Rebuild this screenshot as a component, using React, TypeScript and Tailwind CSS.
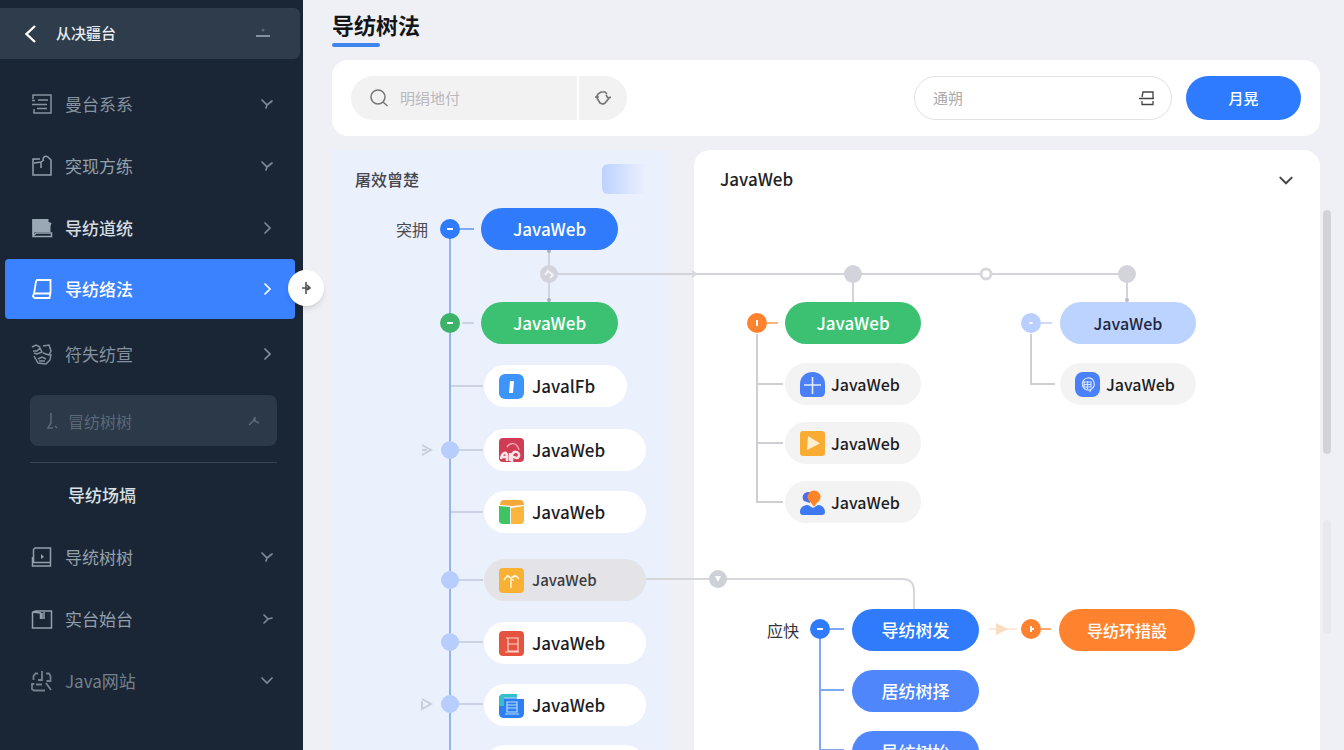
import type { ReactNode } from 'react';
import { clsx } from 'clsx';

const FONT = "font-['Noto_Sans_CJK_SC','Noto_Sans',sans-serif]";

type Chevron = 'down' | 'right' | 'fork' | 'forkRight';

const CHEVRON_PATH: Record<Chevron, string> = {
  down: 'M2 4l5 5 5-5',
  right: 'M5 2l5 5-5 5',
  fork: 'M2 3l5 5 5-4M7 8l-1 3',
  forkRight: 'M4 3l4 4-4 4M8 7l4-1',
};

const ChevronIcon = ({ type, className }: { type: Chevron; className?: string }) => (
  <svg
    aria-hidden
    className={clsx('shrink-0', className ?? 'size-3.5')}
    fill="none"
    stroke="currentColor"
    strokeLinecap="round"
    strokeWidth="1.7"
    viewBox="0 0 14 14"
  >
    <path d={CHEVRON_PATH[type]} />
  </svg>
);

const MenuIcon = ({ children }: { children: ReactNode }) => (
  <svg
    aria-hidden
    className="size-[22px] shrink-0"
    fill="none"
    stroke="currentColor"
    strokeWidth="1.5"
    viewBox="0 0 22 22"
  >
    {children}
  </svg>
);

interface MenuItem {
  label: string;
  chevron: Chevron;
  icon: ReactNode;
  tone: string;
}

const TOP_MENU: MenuItem[] = [
  {
    label: '曼台系系',
    chevron: 'fork',
    tone: 'text-[#8793a0]',
    icon: <path d="M2 6V2h18v18H3v-4M7 7h10M1 11.500h15M1 7.500h3M6 15.500h10" />,
  },
  {
    label: '突现方练',
    chevron: 'fork',
    tone: 'text-[#93a0ac]',
    icon: <path d="M9 4H2v16h18V5l-3-3c-3-2-5 0-5 3M3 8l7-1v6M10 7l3-2" />,
  },
  {
    label: '导纺道统',
    chevron: 'right',
    tone: 'font-medium text-[#d5dbe1]',
    icon: (
      <>
        <path d="M1.500 2h16v3l3 1-1 3v6H4l-2.500 3z" fill="#9aa8b5" stroke="none" />
        <path d="M2 2v17.500h18.500V16H5l-3 3" stroke="#9aa8b5" />
      </>
    ),
  },
];

const BOTTOM_MENU: MenuItem[] = [
  {
    label: '导统树树',
    chevron: 'fork',
    tone: 'text-[#93a0ac]',
    icon: (
      <>
        <path d="M2.500 16V3.500L4 2h15.500v18H1.500v-9M2 16.500h17.500" />
        <path d="M10 8l3 3-3 2z" fill="currentColor" stroke="none" />
      </>
    ),
  },
  {
    label: '实台始台',
    chevron: 'forkRight',
    tone: 'text-[#93a0ac]',
    icon: <path d="M1.500 4v16h19V3H5L1.500 4l8 1v6M13 4v7M11 5v6" />,
  },
  {
    label: 'Java网站',
    chevron: 'down',
    tone: 'text-[#74808d]',
    icon: (
      <path
        d="M11 1v9H7M7 3.500H4.500L2.500 6v4M15 3.500h3l1.500 2.500v5h-4M2.500 13v1H1v5l2 1.500h11M5 14.500h6M15 13l5 7"
        strokeWidth="1.800"
      />
    ),
  },
];

const MenuRow = ({ item }: { item: MenuItem }) => (
  <button
    className={clsx('flex h-[62px] w-full items-center pr-[29px] pl-[31px] text-left', item.tone)}
    type="button"
  >
    <MenuIcon>{item.icon}</MenuIcon>
    <span className="ml-3 flex-1 text-[17px]">{item.label}</span>
    <span className="text-[#7d8996]">
      <ChevronIcon type={item.chevron} />
    </span>
  </button>
);

const Sidebar = () => (
  <aside className="relative z-10 w-[303px] shrink-0 bg-[#1a2635] pt-2">
    <div className="mr-[3px] flex h-[51px] items-center rounded-r-md bg-[#2e3c4c] pr-[30px] pl-6 text-white">
      <button aria-label="返回" type="button">
        <svg
          aria-hidden
          className="h-5 w-3"
          fill="none"
          stroke="currentColor"
          strokeWidth="2.400"
          viewBox="0 0 12 20"
        >
          <path d="M11 2L2.500 10l8.500 8" />
        </svg>
      </button>
      <span className="ml-5 flex-1 text-[15px] font-medium text-[#e8ecf0]">从决疆台</span>
      <svg aria-hidden className="h-3 w-3.5" fill="#8491a0" viewBox="0 0 14 12">
        <circle cx="7" cy="2" fillOpacity=".5" r="1.500" />
        <path d="M0 7h14v2H0z" />
      </svg>
    </div>

    <nav className="mt-3.5">
      {TOP_MENU.map((item) => (
        <MenuRow item={item} key={item.label} />
      ))}

      <button
        aria-current="page"
        className="mr-2 ml-[5px] flex h-[60px] w-[290px] items-center rounded bg-[#3a82ff] pr-[21px] pl-[26px] text-left text-white"
        type="button"
      >
        <MenuIcon>
          <path
            d="M6 2h13.500v12.500l-1.500 1H3L5 3.500zM3 15.500L2 18l1.500 2H18.500l1-5.500"
            strokeWidth="1.800"
          />
        </MenuIcon>
        <span className="ml-3 flex-1 text-[17px] font-medium">导纺络法</span>
        <ChevronIcon type="right" />
      </button>

      <button
        className="mt-1 flex h-[62px] w-full items-center pr-[29px] pl-[31px] text-left text-[#84909d]"
        type="button"
      >
        <MenuIcon>
          <path d="M1 4l4-2 4 2M2 8h4l3-3 2 4-5 2-3-1M12 3l6-1 2 6-2 4-6-2M3 13l4 7 8 1 4-4 1-6M7 16l4-2 4 2M8 18h6" />
        </MenuIcon>
        <span className="ml-3 flex-1 text-[17px]">符失纺宣</span>
        <ChevronIcon type="right" />
      </button>

      <button
        className="mt-2.5 mr-[26px] ml-[30px] flex h-[51px] w-[247px] items-center rounded-lg bg-[#2c3948] px-4 text-left text-[#5b6876]"
        type="button"
      >
        <svg
          aria-hidden
          className="h-[18px] w-3"
          fill="none"
          stroke="currentColor"
          strokeWidth="1.500"
          viewBox="0 0 12 18"
        >
          <path d="M5 1v10L2 16h5M9 14l2 2" />
        </svg>
        <span className="ml-2.5 flex-1 text-base">冒纺树树</span>
        <svg
          aria-hidden
          className="h-3 w-3.5"
          fill="none"
          stroke="currentColor"
          strokeWidth="1.500"
          viewBox="0 0 14 12"
        >
          <path d="M2 10l4-4 2-4v4l4 2M6 6h2" />
        </svg>
      </button>

      <hr className="mt-4 mr-[26px] mb-px ml-[30px] border-[#364352]" />

      <a
        className="flex h-[62px] items-center pl-[68px] text-[17px] font-medium text-[#dce1e6]"
        href="#tree"
      >
        导纺场塥
      </a>

      {BOTTOM_MENU.map((item) => (
        <MenuRow item={item} key={item.label} />
      ))}
    </nav>

    <button
      aria-label="展开"
      className="absolute top-[270px] -right-[21px] flex size-9 items-center justify-center rounded-full bg-white text-[#555] shadow-md"
      type="button"
    >
      <svg
        aria-hidden
        className="size-3"
        fill="none"
        stroke="currentColor"
        strokeWidth="1.600"
        viewBox="0 0 12 12"
      >
        <path d="M6 0v12M2 6h8M7 3l3 3-3 2" />
      </svg>
    </button>
  </aside>
);

const Toolbar = () => (
  <form className="mt-[13px] mr-6 flex h-[76px] items-center justify-between rounded-2xl bg-white px-[19px]">
    <div className="flex h-11 gap-0.5">
      <label className="flex w-[226px] items-center rounded-l-full rounded-r-md bg-[#f2f2f3] pl-[19px]">
        <svg
          aria-hidden
          className="size-[18px] shrink-0 text-[#777]"
          fill="none"
          stroke="currentColor"
          strokeWidth="1.500"
          viewBox="0 0 18 18"
        >
          <circle cx="8" cy="8" r="7" />
          <path d="M13 13l4.500 4" />
        </svg>
        <input
          aria-label="搜索"
          className="ml-3 w-40 bg-transparent text-[15px] outline-none placeholder:text-[#b9b9bc]"
          placeholder="明绢地付"
          type="text"
        />
      </label>
      <button
        aria-label="刷新"
        className="flex w-12 items-center justify-center rounded-r-full bg-[#f2f2f3] text-[#777]"
        type="button"
      >
        <svg
          aria-hidden
          className="size-4"
          fill="none"
          stroke="currentColor"
          strokeWidth="1.700"
          viewBox="0 0 16 16"
        >
          <path d="M1 8l2-4 3-2h4l2 2M0 7h4M2 8l3 5 3 1 2-1 5-6M11 5l2 3 3-1" />
        </svg>
      </button>
    </div>

    <div className="flex h-11 gap-3.5">
      <label className="flex w-[258px] items-center justify-between rounded-full border border-[#e2e2e5] pr-4 pl-[18px]">
        <input
          aria-label="筛选"
          className="w-40 bg-transparent text-[15px] outline-none placeholder:text-[#a9a9ac]"
          placeholder="通朔"
          type="text"
        />
        <svg
          aria-hidden
          className="size-4 text-[#444]"
          fill="none"
          stroke="currentColor"
          strokeWidth="1.300"
          viewBox="0 0 16 16"
        >
          <path d="M3 7l1-5h10v6M0 8.500h15M3 11v3.500h11V11" />
        </svg>
      </label>
      <button
        className="w-[115px] rounded-full bg-[#2f7bff] text-[15px] font-medium text-white"
        type="button"
      >
        月晃
      </button>
    </div>
  </form>
);

const NODE_TONE = {
  blue: 'text-[17px] bg-[#2f7bfb] text-white',
  softBlue: 'text-[17px] bg-[#4f86fb] text-white',
  green: 'text-[17px] bg-[#3cc172] text-white',
  orange: 'text-base bg-[#ff832f] text-white',
  light: 'text-base bg-[#bcd2ff] text-[#1c2740]',
  white: 'text-[17px] bg-white text-[#1d1d1f]',
  grey: 'text-base bg-[#f3f3f4] text-[#1d1d1f]',
  muted: 'text-[15px] bg-[#e3e3e8] text-[#3c3c40]',
};

const NODE_ICON: Record<string, ReactNode> = {
  info: (
    <>
      <rect fill="#3d95fb" height="25" rx="6" width="25" />
      <path d="M11 7h4l-1 12h-4z" fill="#fff" />
    </>
  ),
  script: (
    <>
      <rect fill="#cf3c54" height="24" rx="4" width="25" />
      <path
        d="M2 21c1-7 6-8 6-3v5M3 19h5M11 15v8M13 24v-6c0-6 8-5 7 0-1 3-5 2-5 0"
        fill="none"
        stroke="#ffe3e6"
        strokeWidth="2.500"
      />
      <path d="M8 9c3-5 10-5 12 3" fill="none" stroke="#f2a3ad" strokeWidth="1.500" />
    </>
  ),
  box: (
    <>
      <path d="M0 6l11 1v17H4q-4 0-4-4z" fill="#3fc464" />
      <path d="M12 8l13-2v14q0 4-4 4h-9z" fill="#fbb73c" />
      <path d="M4 0h17q4 0 4 5l-12 1L1 5q0-4 3-5z" fill="#f6a93b" />
    </>
  ),
  palm: (
    <>
      <rect fill="#f9b133" height="25" rx="4" width="25" />
      <path
        d="M12 10v10M12 10L8 7M12 10l4-3M5 12l3-4 4 2 5-2 3 3M12 12h3"
        fill="none"
        stroke="#fff3d6"
        strokeWidth="1.500"
      />
    </>
  ),
  sheet: (
    <>
      <rect fill="#e4543f" height="25" rx="4" width="25" />
      <path d="M7 7h12v13H9M9 7v13M9 13h10M6 21h14" fill="none" stroke="#ffd3cc" strokeWidth="1.200" />
    </>
  ),
  note: (
    <>
      <path d="M5 1h13v5h7v14q0 5-5 5H5q-5 0-5-5V6q0-5 5-5z" fill="#2d7ff3" />
      <path d="M5 1h13v4H5v8H0V6q0-5 5-5z" fill="#35bfca" />
      <path d="M5 5h13M8 9h10v10H8zM8 12h10M8 15h10M6 21h14" fill="none" stroke="#b9dcff" strokeWidth="1.200" />
    </>
  ),
  plus: (
    <>
      <path d="M12.500 0C20 0 25 5 25 12v8q0 5-5 5H5q-5 0-5-5v-8C0 5 5 0 12.500 0z" fill="#4a7ff5" />
      <path d="M12.500 5v17M4 13h17" stroke="#e5edff" strokeWidth="1.600" />
    </>
  ),
  play: (
    <>
      <rect fill="#f9ab32" height="25" rx="3" width="25" />
      <path d="M8 5l12 7.500L7 19z" fill="#fff0d0" />
    </>
  ),
  user: (
    <>
      <path d="M10 2C3 1 1 7 4 11l6 2z" fill="#4a6fe8" />
      <circle cx="14" cy="7" fill="#ff8426" r="6.500" />
      <path d="M9 10l5 7 4-6z" fill="#ff8426" />
      <path d="M0 22c0-5 4-7 8-7l5 3 5-3c4 0 7 3 7 7q0 3-3 3H3q-3 0-3-3z" fill="#3f78f3" />
    </>
  ),
  globe: (
    <>
      <rect fill="#4a80fa" height="25" rx="8" width="25" />
      <path
        d="M12.500 6a6 6 0 1 0 4 11M12.500 6a6 6 0 0 1 4 11l-2 3M9 10h7v5H9zM12.500 9v8M9 12.500h7"
        fill="none"
        stroke="#d8e5ff"
        strokeWidth="1.200"
      />
    </>
  ),
};

interface TreeNode {
  x: number;
  y: number;
  width: number;
  label: string;
  tone: keyof typeof NODE_TONE;
  icon?: string;
}

const NODES: TreeNode[] = [
  { x: 149, y: 58, width: 137, label: 'JavaWeb', tone: 'blue' },
  { x: 149, y: 152, width: 137, label: 'JavaWeb', tone: 'green' },
  { x: 152, y: 215, width: 143, label: 'JavalFb', tone: 'white', icon: 'info' },
  { x: 152, y: 279, width: 162, label: 'JavaWeb', tone: 'white', icon: 'script' },
  { x: 152, y: 341, width: 162, label: 'JavaWeb', tone: 'white', icon: 'box' },
  { x: 152, y: 409, width: 162, label: 'JavaWeb', tone: 'muted', icon: 'palm' },
  { x: 152, y: 472, width: 162, label: 'JavaWeb', tone: 'white', icon: 'sheet' },
  { x: 152, y: 534, width: 162, label: 'JavaWeb', tone: 'white', icon: 'note' },
  { x: 152, y: 595, width: 162, label: '', tone: 'white' },
  { x: 453, y: 152, width: 136, label: 'JavaWeb', tone: 'green' },
  { x: 453, y: 213, width: 136, label: 'JavaWeb', tone: 'grey', icon: 'plus' },
  { x: 453, y: 272, width: 136, label: 'JavaWeb', tone: 'grey', icon: 'play' },
  { x: 453, y: 331, width: 136, label: 'JavaWeb', tone: 'grey', icon: 'user' },
  { x: 728, y: 152, width: 136, label: 'JavaWeb', tone: 'light' },
  { x: 728, y: 213, width: 136, label: 'JavaWeb', tone: 'grey', icon: 'globe' },
  { x: 520, y: 459, width: 127, label: '导纺树发', tone: 'blue' },
  { x: 520, y: 520, width: 127, label: '居纺树择', tone: 'softBlue' },
  { x: 520, y: 581, width: 127, label: '导纺树始', tone: 'softBlue' },
  { x: 727, y: 459, width: 136, label: '导纺环措設', tone: 'orange' },
];

const TOGGLES = [
  { x: 118, y: 79, color: 'bg-[#2f7bfb]', sign: 'M-3 0h6' },
  { x: 118, y: 173, color: 'bg-[#3cb368]', sign: 'M-3 0h6' },
  { x: 425, y: 173, color: 'bg-[#ff832f]', sign: 'M0-3v6M-1 0h2' },
  { x: 699, y: 173, color: 'bg-[#b9cfff]', sign: 'M-1.500 0h3' },
  { x: 488, y: 479, color: 'bg-[#2f7bfb]', sign: 'M-3 0h6' },
  { x: 699, y: 479, color: 'bg-[#ff832f]', sign: 'M0-3v6M0 0h3' },
];

const Connectors = () => (
  <svg aria-hidden className="absolute inset-0" fill="none" height="600" strokeWidth="2" width="988">
    {/* left trunk */}
    <path d="M118 79v521" stroke="#91b5ef" />
    <path d="M128 79h14" stroke="#7fa9f3" />
    <path
      d="M130 173h12M119 236h32M119 300h32M119 362h32M119 430h32M119 492h32M119 554h32"
      stroke="#cbd2e4"
    />
    <g fill="#b7cdfd">
      <circle cx="118" cy="300" r="9" />
      <circle cx="118" cy="430" r="9" />
      <circle cx="118" cy="492" r="9" />
      <circle cx="118" cy="554" r="9" />
    </g>
    <path d="M90 295l9 5-9 5M90 300h5M90 549l9 5-9 5v-8" stroke="#c9cedb" />

    {/* row joining the three branches */}
    <path d="M217 100v52M226 124h422M660 124h135M521 124v28M795 124v28" stroke="#d3d4db" />
    <path d="M360 121l4 3-4 3" stroke="#d9dae2" />
    <g fill="#d3d3db">
      <circle cx="217" cy="124" r="9" />
      <circle cx="521" cy="124" r="9" />
      <circle cx="795" cy="124" r="9" />
      <circle cx="217" cy="101" fill="#aab2c2" r="2" />
      <circle cx="217" cy="150" fill="#aab2c2" r="2" />
      <circle cx="795" cy="150" fill="#b9bcc6" r="2" />
    </g>
    <path d="M213 125l3-4 5 4-3 3" stroke="#f2f3f8" />
    <circle cx="654" cy="124" fill="#fff" r="5" stroke="#d7d7dc" strokeWidth="3" />

    {/* middle and right branches */}
    <path d="M425 184v168h26M425 234h26M425 293h26M699 184v50h24" stroke="#cfcfd3" />
    <path d="M435 173h11" stroke="#fbb37f" />
    <path d="M709 173h11" stroke="#d0dcf7" />

    {/* lower branch */}
    <path d="M314 429h256q12 0 12 12v18" stroke="#d6d7da" />
    <circle cx="386" cy="429" fill="#cdd0d4" r="9" />
    <path d="M383 426h6l-3 6z" fill="#fff" />
    <path d="M488 479v121M488 540h24M488 600h24M498 479h14" stroke="#7ea9f2" />
    <path d="M657 479h28" stroke="#fbeadb" />
    <path d="M664 473l12 6-12 6z" fill="#fbdcc0" />
    <path d="M709 479h10" stroke="#f5a878" />
  </svg>
);

const TreeCanvas = () => (
  <div className="absolute inset-0" id="tree">
    <Connectors />
    <span className="absolute top-[67px] left-16 text-base leading-6 text-[#4a4a50]">突拥</span>
    <span className="absolute top-[468px] left-[435px] text-base leading-6 text-[#333]">应快</span>

    {TOGGLES.map(({ x, y, color, sign }) => (
      <button
        aria-label="折叠"
        className={clsx(
          'absolute flex size-5 -translate-x-1/2 -translate-y-1/2 items-center justify-center rounded-full',
          color,
        )}
        key={`${x}-${y}`}
        style={{ left: x, top: y }}
        type="button"
      >
        <svg aria-hidden className="size-2.5" stroke="#fff" strokeWidth="2" viewBox="-5 -5 10 10">
          <path d={sign} />
        </svg>
      </button>
    ))}

    {NODES.map(({ x, y, width, label, tone, icon }) => (
      <button
        aria-label={label || '节点'}
        className={clsx(
          'absolute flex h-[42px] items-center rounded-full leading-6 font-medium whitespace-nowrap',
          icon ? 'pl-[15px]' : 'justify-center',
          tone === 'white' || tone === 'muted' ? 'gap-2' : 'gap-1.5',
          NODE_TONE[tone],
        )}
        key={`${x}-${y}`}
        style={{ left: x, top: y, width }}
        type="button"
      >
        {icon && (
          <svg aria-hidden className="size-[25px] shrink-0" viewBox="0 0 25 25">
            {NODE_ICON[icon]}
          </svg>
        )}
        {label}
      </button>
    ))}
  </div>
);

const App = () => (
  <div className={clsx('flex h-screen overflow-hidden bg-[#eff0f5]', FONT)}>
    <Sidebar />

    <main className="flex min-w-0 flex-1 flex-col pt-2 pl-[29px]">
      <h1 className="text-[22px] leading-8 font-bold text-[#151517]">导纺树法</h1>
      <div className="mt-[3px] h-1 w-12 shrink-0 rounded-full bg-[#3d85ec]" />

      <Toolbar />

      <div className="mt-3.5 flex min-h-0 flex-1">
        <div className="relative flex min-w-0 flex-1">
          <section className="mr-4 w-[346px] shrink-0 bg-linear-to-r from-[#ebf0fd] from-95% to-[#eff0f5] pt-3.5">
            <div className="flex justify-between pr-8 pl-[23px]">
              <h2 className="text-base leading-[30px] font-medium text-[#47474d]">屠效曾楚</h2>
              <div className="h-[30px] w-11 rounded-l-md bg-linear-to-r from-[#bdd2ff] to-[#ebf0fd]" />
            </div>
          </section>

          <section className="min-w-0 flex-1 rounded-t-2xl bg-white pt-3.5">
            <div className="flex items-center justify-between px-[26px]">
              <h2 className="text-[17px] leading-[30px] font-medium text-[#222]">JavaWeb</h2>
              <button aria-label="收起" className="relative z-10 pt-1 text-[#444]" type="button">
                <ChevronIcon className="size-4" type="down" />
              </button>
            </div>
          </section>

          <TreeCanvas />
        </div>

        {/* scroll gutter */}
        <div className="flex w-6 shrink-0 flex-col pt-[60px] pl-[3px]">
          <div className="h-[244px] w-2 rounded-full bg-[#d2d3d8]" />
          <div className="mt-[66px] h-[114px] w-2 rounded-full bg-[#e8e9ee]" />
        </div>
      </div>
    </main>
  </div>
);

export default App;
